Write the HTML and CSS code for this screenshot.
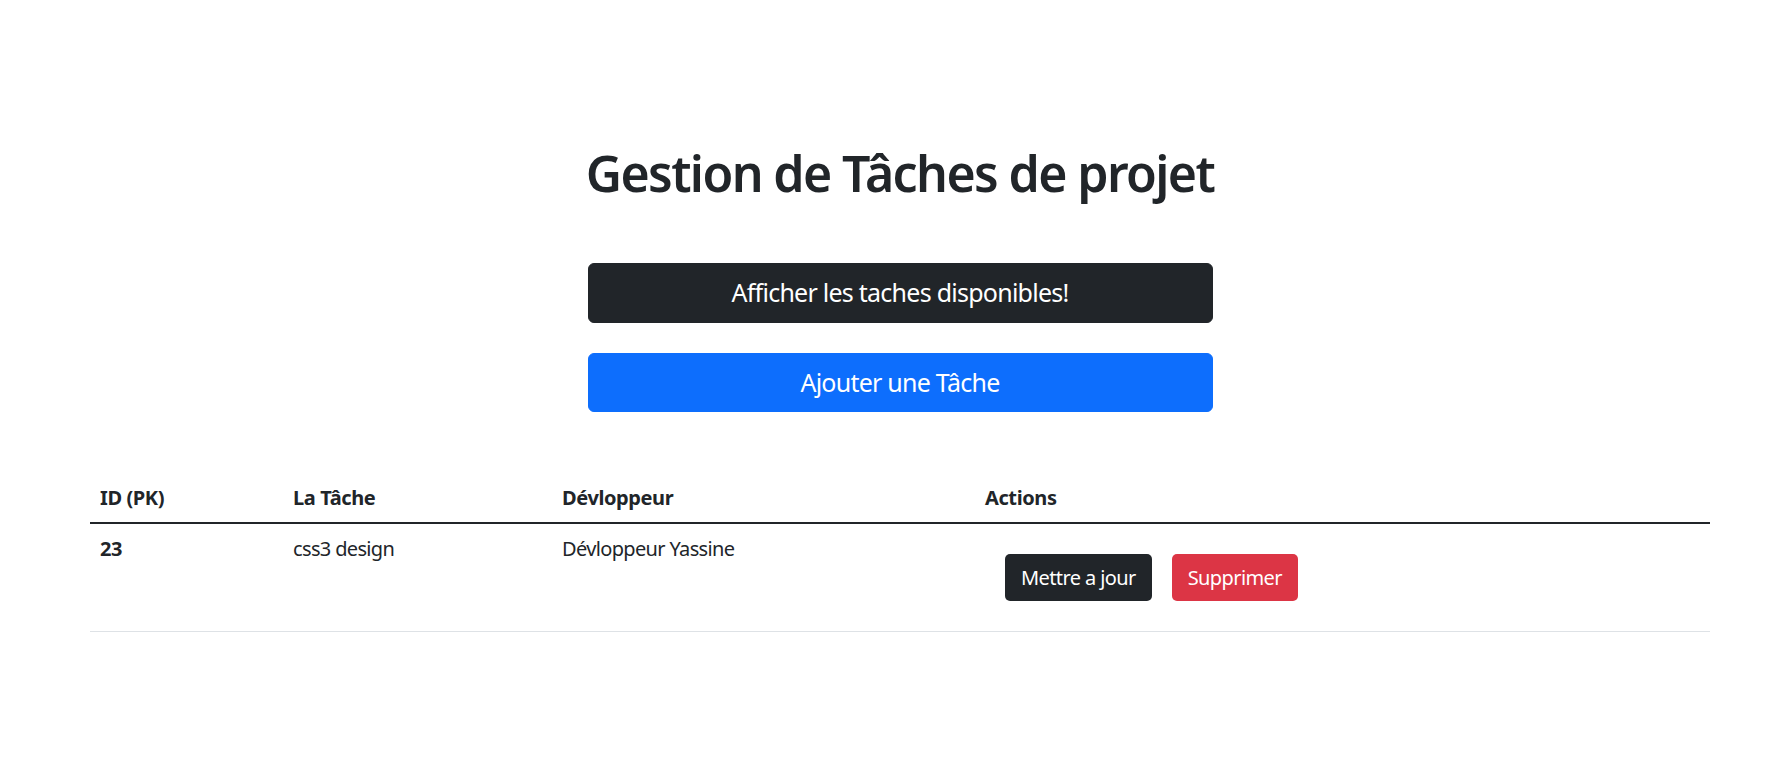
FILE: index.html
```html
<!DOCTYPE html>
<html lang="fr">
<head>
<meta charset="utf-8">
<title>Gestion de Tâches de projet</title>
<link rel="stylesheet" href="styles.css">
</head>
<body>
<main class="page">
  <h1 class="title">Gestion de Tâches de projet</h1>
  <div class="main-actions">
    <button class="btn-lg btn-dark" type="button">Afficher les taches disponibles!</button>
    <button class="btn-lg btn-primary" type="button">Ajouter une Tâche</button>
  </div>
  <table class="tasks">
    <colgroup>
      <col class="col-id">
      <col class="col-task">
      <col class="col-dev">
      <col class="col-actions">
    </colgroup>
    <thead>
      <tr>
        <th>ID (PK)</th>
        <th>La Tâche</th>
        <th>Dévloppeur</th>
        <th>Actions</th>
      </tr>
    </thead>
    <tbody>
      <tr>
        <th>23</th>
        <td>css3 design</td>
        <td>Dévloppeur Yassine</td>
        <td>
          <div class="row-actions">
            <button class="btn btn-dark" type="button">Mettre a jour</button>
            <button class="btn btn-danger" type="button">Supprimer</button>
          </div>
        </td>
      </tr>
    </tbody>
  </table>
</main>
</body>
</html>
```

FILE: styles.css
```css
html, body {
  margin: 0;
  padding: 0;
  background: #ffffff;
}

body {
  font-family: "Noto Sans", "Open Sans", sans-serif;
  color: #212529;
  font-size: 20px;
  line-height: 30px;
  letter-spacing: -0.65px;
}

.page {
  width: 1620px;
  margin-left: 90px;
  padding-top: 143px;
  display: flex;
  flex-direction: column;
  align-items: center;
}

.title {
  margin: 0;
  font-size: 50px;
  line-height: 60px;
  font-weight: 600;
  letter-spacing: -1.6px;
  color: #212529;
}

.main-actions {
  margin-top: 60px;
  width: 625px;
  display: flex;
  flex-direction: column;
  gap: 30px;
}

.btn-lg {
  display: block;
  width: 100%;
  font-family: inherit;
  font-size: 25px;
  line-height: 37.5px;
  letter-spacing: -0.75px;
  padding: 10px 20px;
  border: 1px solid transparent;
  border-radius: 6px;
  color: #ffffff;
  text-align: center;
  cursor: pointer;
}

.btn-dark {
  background: #212529;
  border-color: #212529;
}

.btn-primary {
  background: #0d6efd;
  border-color: #0d6efd;
}

.btn-danger {
  background: #dc3545;
  border-color: #dc3545;
}

.tasks {
  margin-top: 62px;
  width: 100%;
  border-collapse: collapse;
  table-layout: fixed;
  text-align: left;
  vertical-align: top;
}

.col-id { width: 193px; }
.col-task { width: 269px; }
.col-dev { width: 423px; }
.col-actions { width: 735px; }

.tasks th,
.tasks td {
  padding: 10px;
  vertical-align: top;
  font-size: 20px;
  line-height: 30px;
}

.tasks th {
  font-weight: 700;
  letter-spacing: -0.4px;
}

.tasks thead th {
  padding: 9px 10px;
  border-bottom: 2px solid #212529;
}

.tasks tbody th,
.tasks tbody td {
  border-bottom: 1px solid #dee2e6;
}

.row-actions {
  display: flex;
  gap: 20px;
  margin: 20px;
}

.btn {
  font-family: inherit;
  font-size: 20px;
  line-height: 30px;
  letter-spacing: -0.6px;
  padding: 7.5px 15px;
  border: 1px solid transparent;
  border-radius: 5px;
  color: #ffffff;
  cursor: pointer;
}
```
